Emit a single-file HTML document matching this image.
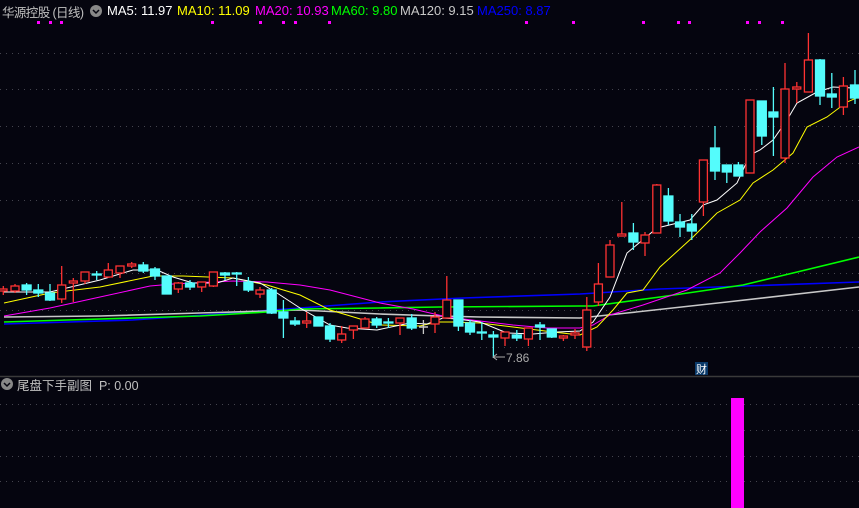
<!DOCTYPE html>
<html><head><meta charset="utf-8"><style>
html,body{margin:0;padding:0;background:#05050f;width:859px;height:508px;overflow:hidden}
.t{position:absolute;font-family:"Liberation Sans","Noto Sans CJK SC",sans-serif;font-size:13px;white-space:nowrap;top:3px}
</style></head><body>
<svg width="859" height="508" style="position:absolute;left:0;top:0" xmlns="http://www.w3.org/2000/svg">
<rect width="859" height="508" fill="#05050f"/>
<g stroke="#44444e" stroke-width="1" stroke-dasharray="1,5">
<line x1="0" y1="53.5" x2="859" y2="53.5"/><line x1="0" y1="89.5" x2="859" y2="89.5"/><line x1="0" y1="126.5" x2="859" y2="126.5"/><line x1="0" y1="163.5" x2="859" y2="163.5"/><line x1="0" y1="200.5" x2="859" y2="200.5"/><line x1="0" y1="237.5" x2="859" y2="237.5"/><line x1="0" y1="273.5" x2="859" y2="273.5"/><line x1="0" y1="310.5" x2="859" y2="310.5"/><line x1="0" y1="347.5" x2="859" y2="347.5"/>
<line x1="0" y1="404.5" x2="859" y2="404.5"/><line x1="0" y1="430.5" x2="859" y2="430.5"/><line x1="0" y1="456.5" x2="859" y2="456.5"/><line x1="0" y1="481.5" x2="859" y2="481.5"/>
</g>
<line x1="0" y1="376.5" x2="859" y2="376.5" stroke="#3a3a3a" stroke-width="1.5"/>
<g fill="#ff00ff">
<rect x="37" y="21" width="3" height="3"/><rect x="49" y="21" width="3" height="3"/><rect x="60" y="21" width="3" height="3"/><rect x="211" y="21" width="3" height="3"/><rect x="259" y="21" width="3" height="3"/><rect x="282" y="21" width="3" height="3"/><rect x="294" y="21" width="3" height="3"/><rect x="328" y="21" width="3" height="3"/><rect x="525" y="21" width="3" height="3"/><rect x="572" y="21" width="3" height="3"/><rect x="642" y="21" width="3" height="3"/><rect x="677" y="21" width="3" height="3"/><rect x="688" y="21" width="3" height="3"/><rect x="746" y="21" width="3" height="3"/><rect x="758" y="21" width="3" height="3"/><rect x="781" y="21" width="3" height="3"/>
</g>
<g fill="none" stroke-width="1">
<polyline stroke="#0000ff" stroke-width="1.6" points="4,324 133,320 233,313 300,308 380,302 463,298 580,294 660,289 859,282"/>
<polyline stroke="#c8c8c8" stroke-width="1.6" points="4,317 100,316 200,313 300,310 380,314 440,316 480,317 580,318 627,313 727,302 859,287"/>
<polyline stroke="#00ff00" stroke-width="1.6" points="4,322 67,320 133,318 200,316 267,312 300,309 380,308 440,307 580,306 593,306 660,297 743,285 793,273 859,257"/>
<polyline stroke="#ff00ff" points="4,316 50,308 100,297 150,286 173,284 233,281 267,282 300,285 330,290 380,303 413,309 447,317 480,321 513,325 547,328 580,328 593,325 610,315 643,305 687,290 720,273 740,253 760,232 787,208 813,177 837,157 859,147"/>
<polyline stroke="#ffff00" points="4,303 50,293 100,287 153,276 183,276 233,278 267,285 280,289 300,295 330,310 347,315 380,325 420,326 437,322 453,322 480,323 513,327 553,332 580,335 597,327 613,310 627,293 643,290 660,267 693,237 717,213 740,200 753,183 773,170 793,153 807,127 827,117 847,102 859,97"/>
<polyline stroke="#ffffff" points="4,292 50,292 100,280 133,270 157,270 173,277 193,283 217,283 233,278 260,283 277,293 300,308 330,325 347,328 377,330 410,323 427,324 443,318 457,319 480,322 507,333 533,334 557,332 580,331 593,322 610,297 627,253 657,228 690,220 703,205 717,200 737,183 750,155 760,150 773,140 787,120 797,103 817,92 833,87 853,88 859,98"/>
</g>
<g stroke="#ff3232" stroke-width="1.3" fill="#05050f">
<line x1="3.3" y1="286" x2="3.3" y2="295"/><rect x="-1" y="289" width="8" height="2"/>
<line x1="15" y1="284" x2="15" y2="293"/><rect x="11" y="286" width="8" height="5"/>
<line x1="61.7" y1="266" x2="61.7" y2="303"/><rect x="57.7" y="285" width="8" height="14"/>
<line x1="73.3" y1="278" x2="73.3" y2="302"/><rect x="69.3" y="281" width="8" height="2"/>
<line x1="85" y1="272" x2="85" y2="284"/><rect x="81" y="272" width="8" height="9"/>
<line x1="108.3" y1="263" x2="108.3" y2="278"/><rect x="104.3" y="270" width="8" height="7"/>
<line x1="120" y1="266" x2="120" y2="278"/><rect x="116" y="266" width="8" height="7"/>
<line x1="131.7" y1="262" x2="131.7" y2="268"/><rect x="127.7" y="264" width="8" height="2"/>
<line x1="178.3" y1="282" x2="178.3" y2="293"/><rect x="174.3" y="283" width="8" height="6"/>
<line x1="201.7" y1="282" x2="201.7" y2="292"/><rect x="197.7" y="282" width="8" height="5"/>
<line x1="213.4" y1="272" x2="213.4" y2="287"/><rect x="209.4" y="272" width="8" height="14"/>
<line x1="260" y1="287" x2="260" y2="298"/><rect x="256" y="290" width="8" height="4"/>
<line x1="306.7" y1="312" x2="306.7" y2="328"/><rect x="302.7" y="321" width="8" height="2"/>
<line x1="341.7" y1="326" x2="341.7" y2="343"/><rect x="337.7" y="334" width="8" height="6"/>
<line x1="353.4" y1="326" x2="353.4" y2="339"/><rect x="349.4" y="326" width="8" height="4"/>
<line x1="365" y1="317" x2="365" y2="328"/><rect x="361" y="319" width="8" height="9"/>
<line x1="400" y1="318" x2="400" y2="335"/><rect x="396" y="318" width="8" height="5"/>
<line x1="435" y1="312" x2="435" y2="333"/><rect x="431" y="317" width="8" height="7"/>
<line x1="446.8" y1="276" x2="446.8" y2="318"/><rect x="442.8" y="300" width="8" height="18"/>
<line x1="505" y1="332" x2="505" y2="346"/><rect x="501" y="332" width="8" height="6"/>
<line x1="528.4" y1="328" x2="528.4" y2="346"/><rect x="524.4" y="328" width="8" height="11"/>
<line x1="563.4" y1="335" x2="563.4" y2="341"/><rect x="559.4" y="336" width="8" height="2"/>
<line x1="575" y1="329" x2="575" y2="339"/><rect x="571" y="333" width="8" height="2"/>
<line x1="586.8" y1="297" x2="586.8" y2="351"/><rect x="582.8" y="310" width="8" height="37"/>
<line x1="598.4" y1="263" x2="598.4" y2="306"/><rect x="594.4" y="284" width="8" height="18"/>
<line x1="610" y1="240" x2="610" y2="277"/><rect x="606" y="245" width="8" height="32"/>
<line x1="621.8" y1="202" x2="621.8" y2="236"/><rect x="617.8" y="234" width="8" height="2"/>
<line x1="645" y1="232" x2="645" y2="256"/><rect x="641" y="235" width="8" height="8"/>
<line x1="656.8" y1="184" x2="656.8" y2="233"/><rect x="652.8" y="185" width="8" height="48"/>
<line x1="703.4" y1="160" x2="703.4" y2="216"/><rect x="699.4" y="160" width="8" height="42"/>
<line x1="750" y1="100" x2="750" y2="173"/><rect x="746" y="100" width="8" height="73"/>
<line x1="785" y1="63" x2="785" y2="163"/><rect x="781" y="89" width="8" height="69"/>
<line x1="796.8" y1="82" x2="796.8" y2="103"/><rect x="792.8" y="87" width="8" height="2"/>
<line x1="808.4" y1="33" x2="808.4" y2="92"/><rect x="804.4" y="60" width="8" height="32"/>
<line x1="843.4" y1="77" x2="843.4" y2="115"/><rect x="839.4" y="86" width="8" height="21"/>
</g>
<g stroke="#54fcfc" stroke-width="1.3" fill="#54fcfc">
<line x1="26.6" y1="283" x2="26.6" y2="295"/><rect x="22.1" y="285" width="9" height="5"/>
<line x1="38.3" y1="284" x2="38.3" y2="297"/><rect x="33.8" y="290" width="9" height="3"/>
<line x1="50" y1="284" x2="50" y2="301"/><rect x="45.5" y="293" width="9" height="7"/>
<line x1="96.7" y1="271" x2="96.7" y2="280"/><rect x="92.2" y="274" width="9" height="1"/>
<line x1="143.3" y1="262" x2="143.3" y2="273"/><rect x="138.8" y="265" width="9" height="6"/>
<line x1="155" y1="267" x2="155" y2="280"/><rect x="150.5" y="269" width="9" height="7"/>
<line x1="166.7" y1="276" x2="166.7" y2="294"/><rect x="162.2" y="276" width="9" height="18"/>
<line x1="190" y1="280" x2="190" y2="290"/><rect x="185.5" y="283" width="9" height="4"/>
<line x1="225" y1="272" x2="225" y2="280"/><rect x="220.5" y="273" width="9" height="2"/>
<line x1="236.7" y1="272" x2="236.7" y2="286"/><rect x="232.2" y="273" width="9" height="1"/>
<line x1="248.4" y1="277" x2="248.4" y2="292"/><rect x="243.9" y="282" width="9" height="8"/>
<line x1="271.7" y1="288" x2="271.7" y2="314"/><rect x="267.2" y="290" width="9" height="23"/>
<line x1="283.4" y1="300" x2="283.4" y2="338"/><rect x="278.9" y="312" width="9" height="6"/>
<line x1="295" y1="317" x2="295" y2="326"/><rect x="290.5" y="321" width="9" height="3"/>
<line x1="318.4" y1="317" x2="318.4" y2="326"/><rect x="313.9" y="317" width="9" height="9"/>
<line x1="330" y1="323" x2="330" y2="342"/><rect x="325.5" y="326" width="9" height="13"/>
<line x1="376.7" y1="317" x2="376.7" y2="328"/><rect x="372.2" y="319" width="9" height="6"/>
<line x1="388.4" y1="318" x2="388.4" y2="328"/><rect x="383.9" y="322" width="9" height="1"/>
<line x1="411.7" y1="314" x2="411.7" y2="330"/><rect x="407.2" y="318" width="9" height="10"/>
<line x1="458.4" y1="300" x2="458.4" y2="331"/><rect x="453.9" y="300" width="9" height="26"/>
<line x1="470" y1="320" x2="470" y2="335"/><rect x="465.5" y="323" width="9" height="9"/>
<line x1="481.8" y1="322" x2="481.8" y2="340"/><rect x="477.3" y="332" width="9" height="1"/>
<line x1="493.4" y1="331" x2="493.4" y2="358"/><rect x="488.9" y="335" width="9" height="2"/>
<line x1="516.8" y1="330" x2="516.8" y2="341"/><rect x="512.3" y="335" width="9" height="3"/>
<line x1="540" y1="322" x2="540" y2="340"/><rect x="535.5" y="325" width="9" height="2"/>
<line x1="551.8" y1="329" x2="551.8" y2="338"/><rect x="547.3" y="329" width="9" height="8"/>
<line x1="633.4" y1="223" x2="633.4" y2="250"/><rect x="628.9" y="233" width="9" height="9"/>
<line x1="668.4" y1="188" x2="668.4" y2="225"/><rect x="663.9" y="196" width="9" height="25"/>
<line x1="680" y1="214" x2="680" y2="237"/><rect x="675.5" y="222" width="9" height="5"/>
<line x1="691.8" y1="214" x2="691.8" y2="240"/><rect x="687.3" y="224" width="9" height="7"/>
<line x1="715" y1="126" x2="715" y2="180"/><rect x="710.5" y="148" width="9" height="23"/>
<line x1="726.8" y1="165" x2="726.8" y2="183"/><rect x="722.3" y="165" width="9" height="7"/>
<line x1="738.4" y1="162" x2="738.4" y2="176"/><rect x="733.9" y="165" width="9" height="11"/>
<line x1="761.8" y1="101" x2="761.8" y2="145"/><rect x="757.3" y="101" width="9" height="35"/>
<line x1="773.4" y1="87" x2="773.4" y2="156"/><rect x="768.9" y="112" width="9" height="5"/>
<line x1="820" y1="59" x2="820" y2="105"/><rect x="815.5" y="60" width="9" height="36"/>
<line x1="831.8" y1="73" x2="831.8" y2="108"/><rect x="827.3" y="94" width="9" height="3"/>
<line x1="855" y1="70" x2="855" y2="104"/><rect x="850.5" y="85" width="9" height="13"/>
</g>
<line x1="423.4" y1="320" x2="423.4" y2="334" stroke="#c8c8c8" stroke-width="1.3"/><line x1="419" y1="327" x2="428" y2="327" stroke="#c8c8c8" stroke-width="1.5"/>
<path d="M493 357 H505 M493 357 l4 -3 M493 357 l4 3" stroke="#aaaaaa" stroke-width="1" fill="none"/>
<text x="506" y="362" font-family="Liberation Sans" font-size="12" fill="#aaaaaa">7.86</text>
<rect x="695" y="362" width="13" height="13" fill="#0a3a6a"/>
<text x="696" y="373" font-family="Noto Sans CJK SC,sans-serif" font-size="11" fill="#ffffff">财</text>
<rect x="731" y="398" width="13" height="110" fill="#ff00ff"/>
<circle cx="96" cy="11" r="6" fill="#888"/><path d="M93 10 L96 13 L99 10" stroke="#05050f" stroke-width="1.5" fill="none"/>
<circle cx="7" cy="384" r="6" fill="#888"/><path d="M4 383 L7 386 L10 383" stroke="#05050f" stroke-width="1.5" fill="none"/>
</svg>
<div class="t" style="left:2px;top:2px;color:#c0c0c0;font-size:12.5px;letter-spacing:-0.6px">华源控股 (日线)</div>
<div class="t" style="left:107px;color:#ffffff">MA5: 11.97</div>
<div class="t" style="left:177px;color:#ffff00">MA10: 11.09</div>
<div class="t" style="left:255px;color:#ff00ff">MA20: 10.93</div>
<div class="t" style="left:331px;color:#00ff00">MA60: 9.80</div>
<div class="t" style="left:400px;color:#c8c8c8">MA120: 9.15</div>
<div class="t" style="left:477px;color:#0000ff">MA250: 8.87</div>
<div class="t" style="left:17px;top:375px;color:#c0c0c0;font-size:12.5px">尾盘下手副图&nbsp; P: 0.00</div>
</body></html>
